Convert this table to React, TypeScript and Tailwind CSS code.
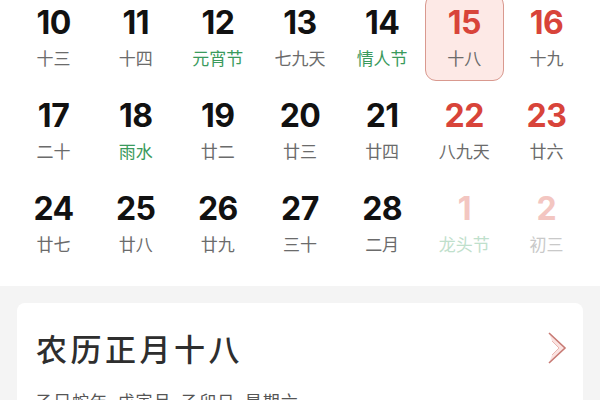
import React from "react";

type Cell = { d: string; l: string; dc?: string; lc?: string; sel?: boolean };

const BLACK = "text-[#111111]";
const RED = "text-[#d8443a]";
const GREY = "text-[#6b6b6b]";
const GREEN = "text-[#3a9a5c]";

const rows: Cell[][] = [
  [
    { d: "10", l: "十三" },
    { d: "11", l: "十四" },
    { d: "12", l: "元宵节", lc: GREEN },
    { d: "13", l: "七九天" },
    { d: "14", l: "情人节", lc: GREEN },
    { d: "15", l: "十八", dc: RED, sel: true },
    { d: "16", l: "十九", dc: RED },
  ],
  [
    { d: "17", l: "二十" },
    { d: "18", l: "雨水", lc: GREEN },
    { d: "19", l: "廿二" },
    { d: "20", l: "廿三" },
    { d: "21", l: "廿四" },
    { d: "22", l: "八九天", dc: RED },
    { d: "23", l: "廿六", dc: RED },
  ],
  [
    { d: "24", l: "廿七" },
    { d: "25", l: "廿八" },
    { d: "26", l: "廿九" },
    { d: "27", l: "三十" },
    { d: "28", l: "二月" },
    { d: "1", l: "龙头节", dc: "text-[#f3c6c1]", lc: "text-[#bfe0cc]" },
    { d: "2", l: "初三", dc: "text-[#f3c6c1]", lc: "text-[#c9c9c9]" },
  ],
];

function DayCell({ c }: { c: Cell }) {
  return (
    <div
      className={
        "flex h-[87px] flex-col items-center pt-[12px] rounded-[11px] " +
        (c.sel ? "bg-[#fde9e6] border border-[#d9998f]" : "border border-transparent")
      }
    >
      <div
        className={
          "h-[32px] text-[32px] leading-[32px] font-bold tracking-[-0.5px] " + (c.dc ?? BLACK)
        }
        style={{ fontFamily: "Inter, 'Liberation Sans', sans-serif" }}
      >
        {c.d}
      </div>
      <div
        className={"mt-[9px] h-[20px] text-[17px] leading-[20px] " + (c.lc ?? GREY)}
        style={{ fontFamily: "'Noto Sans CJK SC', sans-serif" }}
      >
        {c.l}
      </div>
    </div>
  );
}

export default function App() {
  return (
    <div className="w-[600px] h-[400px] overflow-hidden bg-white">
      <div className="-mt-[6px] flex flex-col gap-[6px] px-[14px]">
        {rows.map((r, i) => (
          <div key={i} className="grid grid-cols-7 gap-[3px]">
            {r.map((c, j) => (
              <DayCell key={j} c={c} />
            ))}
          </div>
        ))}
      </div>
      <div className="mt-[19px] bg-[#f4f4f4] px-[17px] pt-[17px] h-[200px]">
        <div className="rounded-[8px] bg-white pl-[19px] pr-[16px] pt-[25px] h-[200px]">
          <div className="flex items-center justify-between">
            <div
              className="text-[31px] leading-[40px] tracking-[3.5px] font-medium text-[#2e2e2e]"
              style={{ fontFamily: "'Noto Sans CJK SC', sans-serif" }}
            >
              农历正月十八
            </div>
            <svg width="20" height="34" viewBox="0 0 20 34">
              <path d="M2 2 L18 17 L2 32 L5 24 L12 17 L5 10 Z" fill="#fbe3e1" />
              <path d="M2 2 L18 17 L2 32" fill="none" stroke="#c77a74" strokeWidth="1.6" />
              <path d="M5 10 L12 17 L5 24" fill="none" stroke="#eab7b2" strokeWidth="1" />
            </svg>
          </div>
          <div
            className="mt-[22px] text-[17px] leading-[22px] text-[#555555] tracking-[1px]"
            style={{ fontFamily: "'Noto Sans CJK SC', sans-serif" }}
          >
            乙巳蛇年&nbsp;&nbsp;戊寅月&nbsp;&nbsp;乙卯日&nbsp;&nbsp;星期六
          </div>
        </div>
      </div>
    </div>
  );
}
